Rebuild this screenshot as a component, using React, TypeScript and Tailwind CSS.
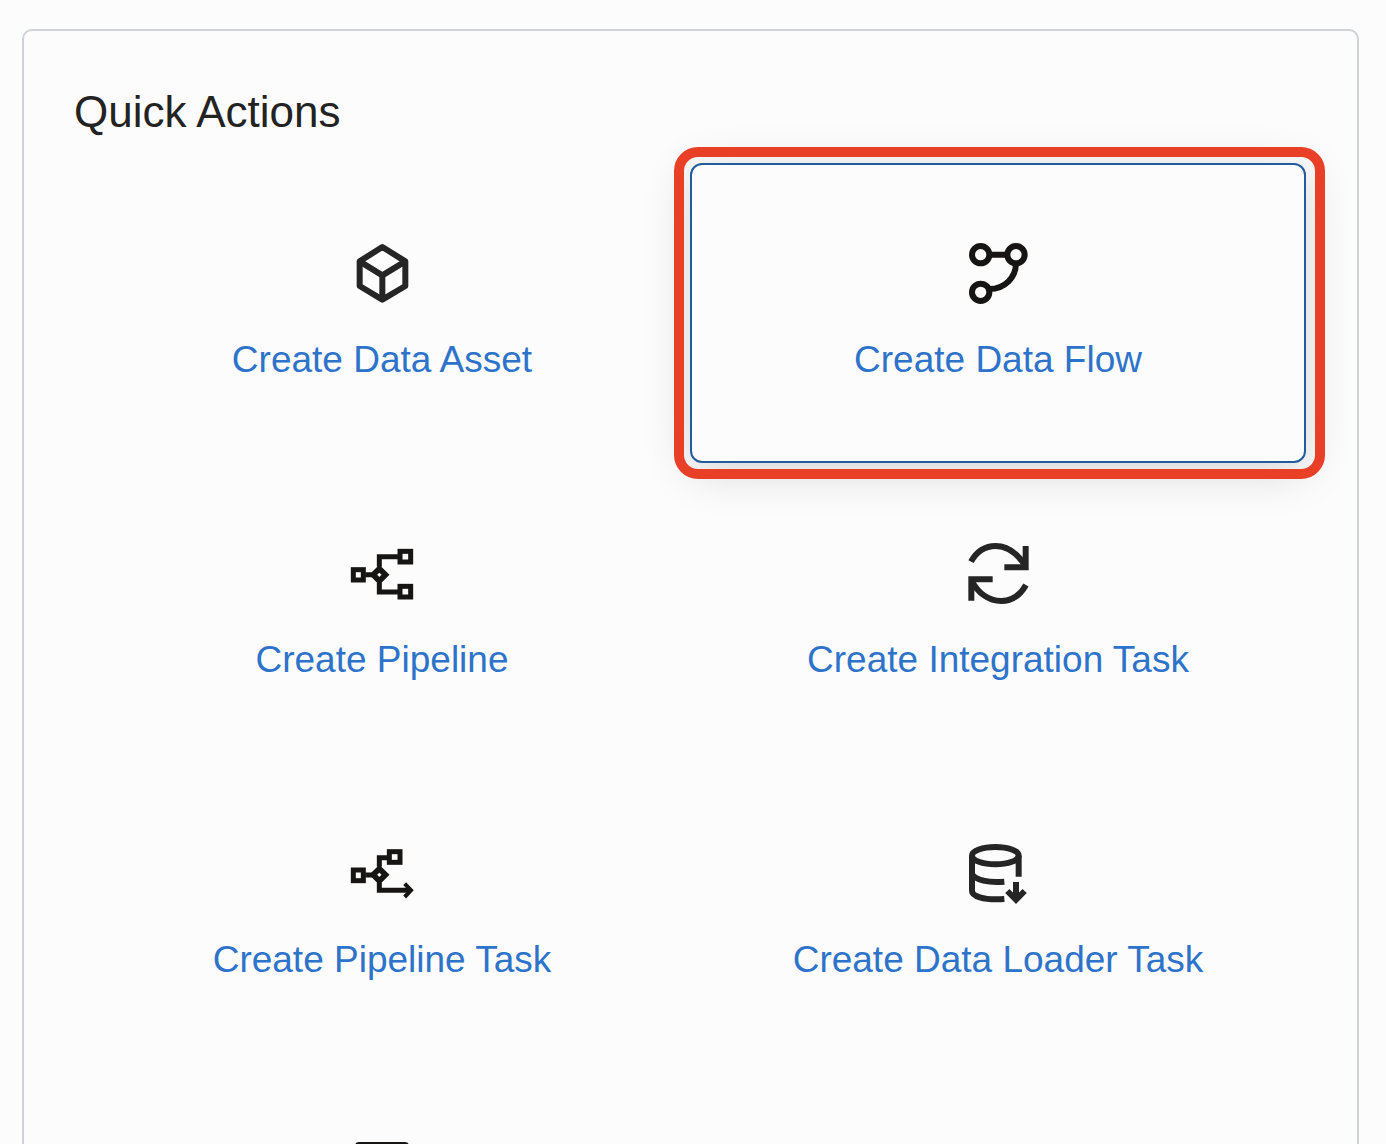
import React from "react";

function Icon({ children }: { children: React.ReactNode }) {
  return (
    <svg
      viewBox="0 0 240 240"
      className="size-20 shrink-0"
      fill="none"
      stroke="currentColor"
      aria-hidden="true"
    >
      {children}
    </svg>
  );
}

const AssetIcon = () => (
  <Icon>
    <g strokeWidth="18" strokeLinejoin="round">
      <path d="M121 42 190 85V159L121 200 53 159V85Z" />
      <path d="M53 85 121 127 190 85M121 127V200" />
    </g>
  </Icon>
);

const FlowIcon = () => (
  <Icon>
    <g strokeWidth="18">
      <circle cx="68" cy="65" r="26" />
      <circle cx="174" cy="65" r="26" />
      <circle cx="68" cy="178" r="26" />
      <path d="M94 65H148M174 91C174 132 141 168 94 168" />
    </g>
  </Icon>
);

const PipelineIcon = () => (
  <Icon>
    <g strokeWidth="15">
      <rect x="34" y="110" width="30" height="31" />
      <rect x="174" y="55" width="32" height="32" />
      <rect x="174" y="160" width="32" height="32" />
      <path d="M70 125H92M112 101V71H168M112 149V177H168" />
      <path d="M112 107 130.500 125.500 112 144 93.500 125.500Z" strokeWidth="17" />
    </g>
  </Icon>
);

const SyncIcon = () => (
  <Icon>
    <g strokeWidth="18">
      <path d="M39 86C59 50 84 39 113 39 153 39 179 63 202 98" />
      <path d="M203 39V103H139" />
      <path d="M204 156C184 191 158 204 130 204 91 204 60 179 41 144" />
      <path d="M40 203V139H104" />
    </g>
  </Icon>
);

const PipelineTaskIcon = () => (
  <Icon>
    <g strokeWidth="15">
      <rect x="34" y="111" width="30" height="32" />
      <rect x="142" y="56" width="32" height="32" />
      <path d="M70 126H92M112 101V74H136M112 149V172H206" />
      <path d="M112 107 130.500 125.500 112 144 93.500 125.500Z" strokeWidth="17" />
      <path d="M188 152 207 172 188 192" strokeWidth="12" />
    </g>
  </Icon>
);

const LoaderIcon = () => (
  <Icon>
    <g strokeWidth="18">
      <ellipse cx="112" cy="68" rx="70" ry="26" />
      <path d="M42 68V174C42 188 73 203 139 198M182 68V131" />
      <path d="M42 123C51 141 91 150 139 146" />
      <path d="M174 147V200M148 174 174 200 200 174" />
    </g>
  </Icon>
);

const SqlIcon = () => (
  <Icon>
    <rect x="47" y="35" width="146" height="166" rx="4" strokeWidth="16" />
  </Icon>
);

const actions = [
  { label: "Create Data Asset", icon: AssetIcon, ink: "text-[#242524]" },
  { label: "Create Data Flow", icon: FlowIcon, ink: "text-[#161513]", selected: true },
  { label: "Create Pipeline", icon: PipelineIcon, ink: "text-[#161513]" },
  { label: "Create Integration Task", icon: SyncIcon, ink: "text-[#242524]" },
  { label: "Create Pipeline Task", icon: PipelineTaskIcon, ink: "text-[#161513]" },
  { label: "Create Data Loader Task", icon: LoaderIcon, ink: "text-[#242524]" },
];

export default function App() {
  return (
    <main className="h-screen overflow-hidden bg-[#fcfcfc] pt-[29px] pr-[27px] pl-[22px] font-['Liberation_Sans',Arial,sans-serif]">
      <section
        aria-labelledby="quick-actions"
        className="rounded-[10px] border-2 border-[#cfd3d6] pt-[55px] pr-[51px] pb-12 pl-[50px]"
      >
        <h1 id="quick-actions" className="text-[44px] leading-[52px] text-[#222322]">
          Quick Actions
        </h1>
        <div className="mt-[25px] grid auto-rows-[300px] grid-cols-2">
          {actions.map(({ label, icon: Glyph, ink, selected }) => (
            <button
              key={label}
              type="button"
              className={
                selected
                  ? "relative flex cursor-pointer flex-col items-center rounded-xl border-2 border-[#235c9e] bg-[#fcfcfc] pt-[68px] shadow-[0_8px_48px_rgba(0,0,0,0.16)]"
                  : "flex cursor-pointer flex-col items-center rounded-xl border-2 border-transparent pt-[68px]"
              }
            >
              <span className={ink}>
                <Glyph />
              </span>
              <span className="mt-6 text-[37px] leading-[46px] whitespace-nowrap text-[#2d73ca]">
                {label}
              </span>
              {selected && (
                <span className="pointer-events-none absolute -inset-y-[18px] -right-[21px] -left-[18px] rounded-3xl border-10 border-[#e93f26]" />
              )}
            </button>
          ))}
          <button
            type="button"
            aria-label="Create SQL Task"
            className="flex cursor-pointer flex-col items-center rounded-xl border-2 border-transparent pt-[68px] text-[#161513]"
          >
            <SqlIcon />
          </button>
        </div>
      </section>
    </main>
  );
}
